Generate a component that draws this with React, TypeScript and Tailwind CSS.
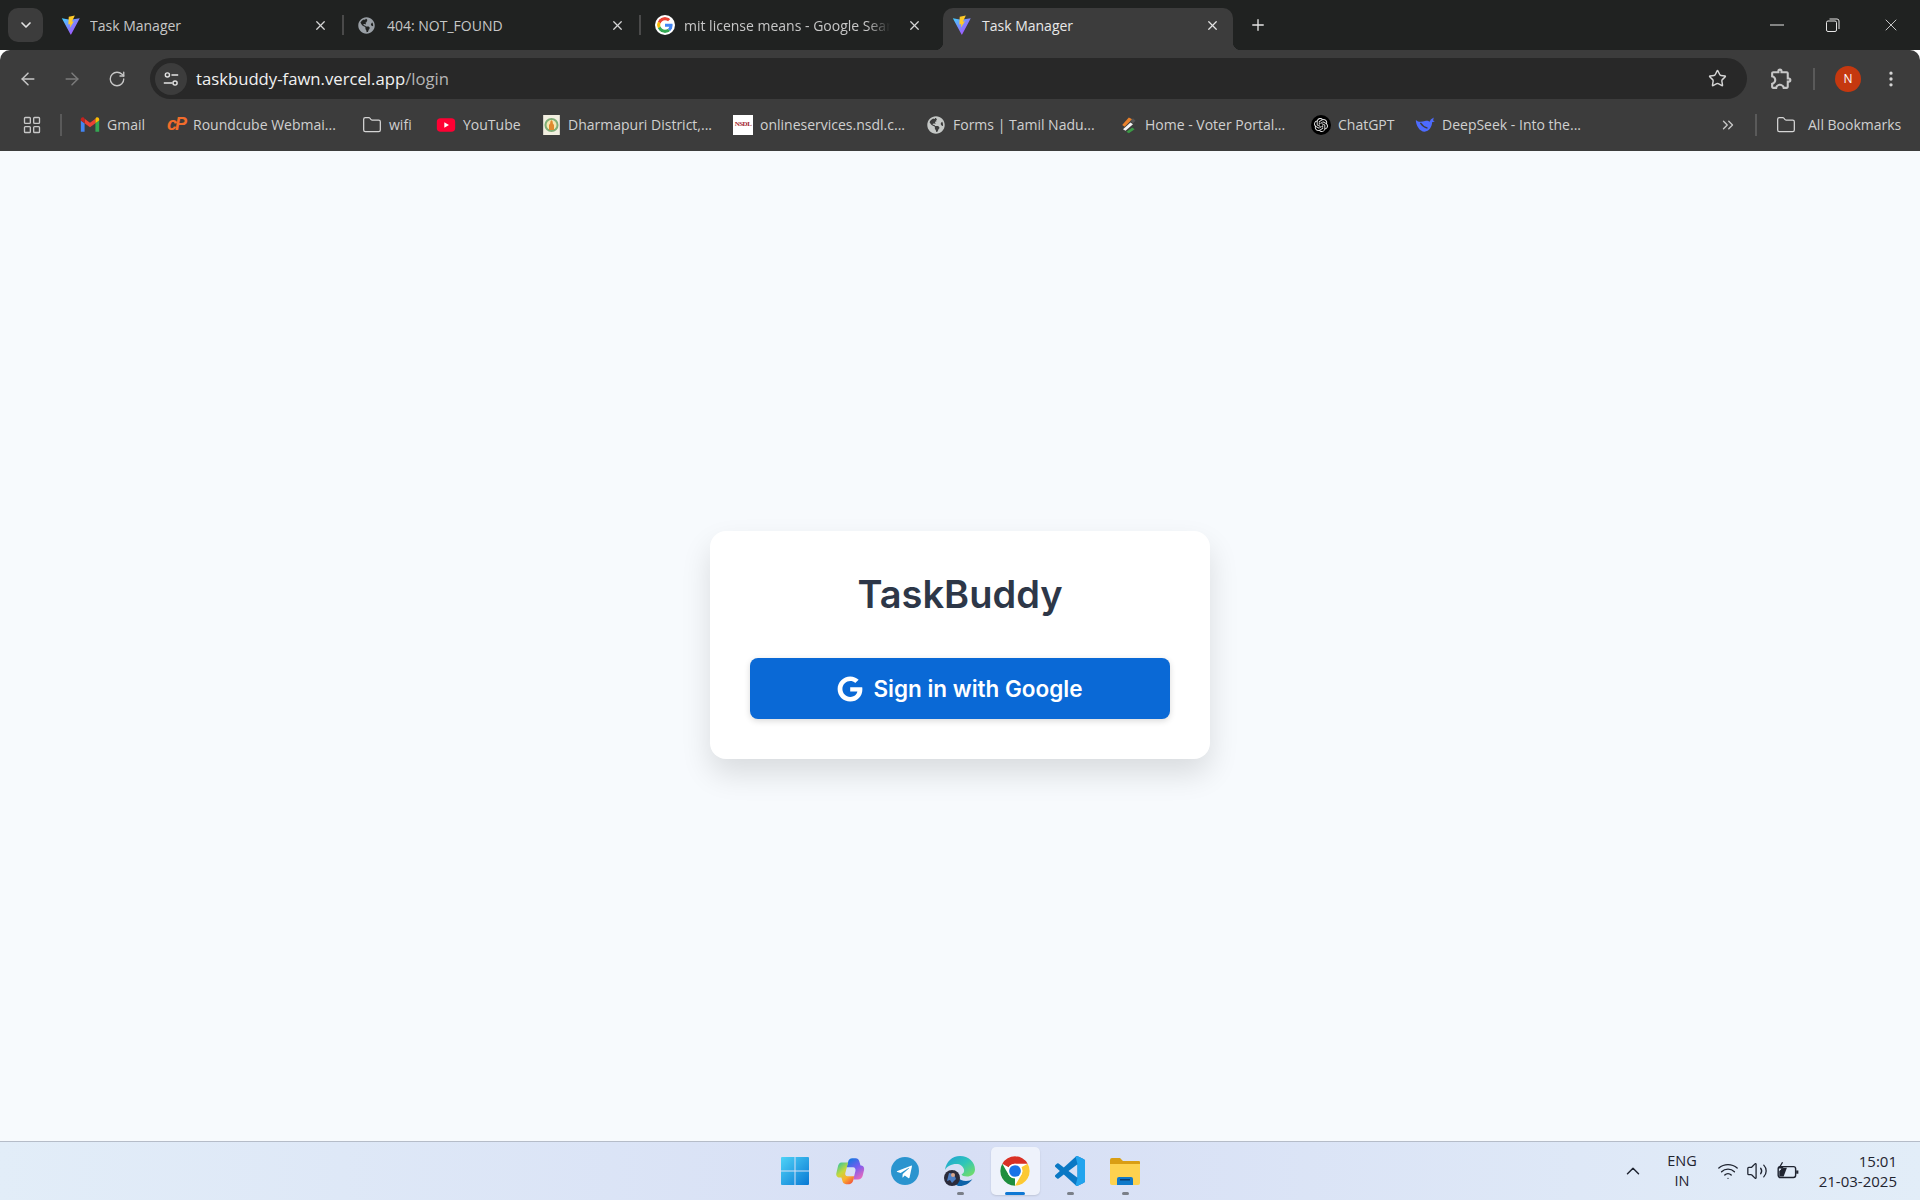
import React from 'react';
import {
  ArrowLeft, ArrowRight, ChevronDown, ChevronUp, ChevronsRight, EllipsisVertical, Folder,
  LayoutGrid, Plus, RotateCw, Star, Volume2, Wifi, X,
} from 'lucide-react';
import { FaGlobeAmericas, FaGoogle } from 'react-icons/fa';
import { MdOutlineExtension } from 'react-icons/md';
import { SiOpenai } from 'react-icons/si';

const ViteIcon = () => (
  <svg viewBox="0 0 24 24" className="h-[20px] w-[20px]">
    <defs>
      <linearGradient id="viteA" x1="0" y1="0" x2="1" y2="1">
        <stop offset="0" stopColor="#41d1ff" />
        <stop offset="1" stopColor="#bd34fe" />
      </linearGradient>
    </defs>
    <path d="M1 4l10 1.6L22.500 4 12.300 23.200c-.3.500-.8.500-1 0z" fill="url(#viteA)" />
    <path d="M16.600.5L9.300 2l-.5 9.300 2.400-.5-.6 4.400 5-7.700-2.600.5z" fill="#ffca28" />
  </svg>
);

const GoogleIcon = () => (
  <svg viewBox="0 0 48 48" className="h-[20px] w-[20px] rounded-full bg-white p-[2px]">
    <path fill="#ea4335" d="M24 9.500c3.500 0 6.700 1.200 9.200 3.600l6.900-6.900C35.900 2.400 30.500 0 24 0 14.600 0 6.500 5.400 2.600 13.200l8 6.200C12.400 13.700 17.700 9.500 24 9.500z" />
    <path fill="#4285f4" d="M46.900 24.500c0-1.600-.1-3.100-.4-4.500H24v9h12.900c-.6 3-2.200 5.500-4.700 7.200l7.700 6c4.400-4.100 7-10.200 7-17.700z" />
    <path fill="#fbbc05" d="M10.500 28.600c-.5-1.400-.8-3-.8-4.600s.3-3.200.8-4.600l-8-6.200C.9 16.500 0 20.100 0 24s.9 7.500 2.600 10.800z" />
    <path fill="#34a853" d="M24 48c6.500 0 11.900-2.100 15.900-5.800l-7.700-6c-2.200 1.400-4.900 2.300-8.200 2.300-6.300 0-11.600-4.200-13.500-9.900l-8 6.200C6.500 42.600 14.600 48 24 48z" />
  </svg>
);

const GmailIcon = () => (
  <svg viewBox="0 0 24 24" className="h-[20px] w-[20px]">
    <path fill="#4285f4" d="M1 20h4.500V10L1 6.500z" />
    <path fill="#34a853" d="M18.500 20H23V6.500L18.500 10z" />
    <path fill="#ea4335" d="M5.500 10V4.500L12 9.400l6.500-4.900V10L12 14.800z" />
    <path fill="#fbbc04" d="M18.500 4.500V10L23 6.500V5c0-2-2.200-3-3.700-1.800z" />
    <path fill="#c5221f" d="M1 6.500L5.500 10V4.500L4.700 3.200C3.200 2 1 3 1 5z" />
  </svg>
);

const YoutubeIcon = () => (
  <svg viewBox="0 0 24 24" className="h-[20px] w-[20px]">
    <rect x="1" y="4" width="22" height="16" rx="4.500" fill="#ff0033" />
    <path d="M10 8.800l5.500 3.200-5.500 3.200z" fill="#fff" />
  </svg>
);

const DistrictIcon = () => (
  <svg viewBox="0 0 20 24" className="h-[20px] w-[17px]">
    <rect width="20" height="24" fill="#f2efe0" />
    <circle cx="10" cy="12" r="8.500" fill="#7fae76" />
    <circle cx="10" cy="12" r="6" fill="#f6e7b0" />
    <path d="M7 18v-6l1.500-2V8l1.500-2 1.500 2v2l1.500 2v6z" fill="#e08a2e" />
  </svg>
);

const NsdlIcon = () => (
  <div className="flex h-[20px] w-[20px] items-center justify-center overflow-hidden bg-white font-['Liberation_Serif',serif] text-[7px] font-bold tracking-[-0.5px] text-[#a3262e]">
    NSDL
  </div>
);

const VoterIcon = () => (
  <svg viewBox="0 0 24 24" className="h-[20px] w-[20px]">
    <path d="M13 3l4 2-9 9-3-2z" fill="#e9812b" />
    <path d="M15 9l3 2-9 8-3-2z" fill="#f5f5f5" />
    <path d="M17 15l3 2-7 5-3-2z" fill="#3c9a47" />
    <path d="M18 4l3 3-3 3-3-3z" fill="#555" />
  </svg>
);

const ChatgptIcon = () => (
  <div className="flex h-[20px] w-[20px] items-center justify-center rounded-full bg-black text-[#e8e8e8]">
    <SiOpenai size={14} />
  </div>
);

const DeepseekIcon = () => (
  <svg viewBox="0 0 24 24" className="h-[20px] w-[20px]">
    <path d="M1 6c3 3 7 2.500 11 1.200 2.500-.7 4.500-.2 5.500 1L19 5.500 22.500 3l-.8 3.500 2 1.200-3.200 1.100C20.500 14 17 20 11.500 20 5.500 20 1 12.500 1 6z" fill="#4d6bfe" />
    <path d="M6.500 9.500c2 3.200 4.500 5.200 8.500 6.200" fill="none" stroke="#3c3c3c" strokeWidth="1.600" />
  </svg>
);

const TuneIcon = () => (
  <svg viewBox="0 0 20 20" className="h-[18px] w-[18px]" fill="none" stroke="#e3e3e3" strokeWidth="1.600">
    <circle cx="6" cy="5.500" r="2.300" />
    <path d="M10.500 5.500H18M2 14.500h9.500" />
    <circle cx="14.500" cy="14.500" r="2.300" />
  </svg>
);

const WindowsIcon = () => (
  <svg viewBox="0 0 30 30" className="h-[30px] w-[30px]">
    <defs>
      <linearGradient id="winA" x1="0" y1="0" x2="1" y2="1">
        <stop offset="0" stopColor="#4fd3f7" />
        <stop offset="1" stopColor="#0878d4" />
      </linearGradient>
    </defs>
    <path d="M1 2a1 1 0 0 1 1-1h12.500v13.500H1zM15.500 1H28a1 1 0 0 1 1 1v12.500H15.500zM1 15.500h13.500V29H2a1 1 0 0 1-1-1zM15.500 15.500H29V28a1 1 0 0 1-1 1H15.500z" fill="url(#winA)" />
  </svg>
);

const CopilotIcon = () => (
  <svg viewBox="0 0 32 32" className="h-[30px] w-[30px]">
    <defs>
      <linearGradient id="copA" x1="0.2" y1="0" x2="0.8" y2="1">
        <stop offset="0" stopColor="#1478e0" />
        <stop offset="0.5" stopColor="#7a5cf0" />
        <stop offset="1" stopColor="#f06ab8" />
      </linearGradient>
      <linearGradient id="copB" x1="0.1" y1="0" x2="0.8" y2="1">
        <stop offset="0" stopColor="#2fc7a0" />
        <stop offset="0.4" stopColor="#c8d83c" />
        <stop offset="0.7" stopColor="#fbb02e" />
        <stop offset="1" stopColor="#f2563c" />
      </linearGradient>
    </defs>
    <path d="M14 6c.6-2 2-3.500 4.500-3.500H22c2 0 3.300 1.300 3.900 3.200l1.300 4.300h.8c2.500 0 3.500 2.500 3 5l-1.500 6c-.6 2.500-2.600 4-5 4h-5l2.300-9c.5-2-.5-4-2.500-4h-7z" fill="url(#copA)" />
    <path d="M7 7h7l-3 11c-.5 2 .5 3.500 2.500 3.500h7l-1.200 5c-.5 2-2 3.500-4 3.500h-3.500c-2 0-3.300-1.200-3.800-3l-1.200-4H5c-2.800 0-4.200-2.500-3.500-5l1.300-5.500C3.300 9 5 7 7 7z" fill="url(#copB)" />
  </svg>
);

const TelegramIcon = () => (
  <svg viewBox="0 0 24 24" className="h-[28px] w-[28px]">
    <circle cx="12" cy="12" r="12" fill="#2a94cf" />
    <path d="M5.500 11.900l11.600-4.500c.5-.2 1 .1.800.9l-2 9.300c-.1.700-.5.800-1.100.5l-3-2.200-1.400 1.400c-.2.200-.3.300-.6.300l.2-3 5.500-5c.2-.2 0-.3-.4-.1l-6.800 4.300-2.900-.9c-.6-.2-.6-.6.100-.9z" fill="#fff" />
  </svg>
);

const EdgeIcon = () => (
  <svg viewBox="0 0 32 32" className="h-[32px] w-[32px]">
    <defs>
      <linearGradient id="edgeA" x1="0" y1="0" x2="1" y2="1">
        <stop offset="0" stopColor="#1f9fd8" />
        <stop offset="0.5" stopColor="#2fc6b8" />
        <stop offset="1" stopColor="#7fe05a" />
      </linearGradient>
    </defs>
    <path d="M1 15C2 7 8 1 16 1c8.500 0 15 6 15 13.500 0 4.500-4 7-8 7-3 0-5-1-5.500-2 2-1 3-3 2.500-5C19 11 16 9 12.500 9 7 9 3 11.500 1 15z" fill="url(#edgeA)" />
    <path d="M11 15c-1 5 4 11 11 11 3 0 5-.8 6.500-2C25 29 20 31 16 31 8 31 8 20 11 15z" fill="#0c63a8" />
    <circle cx="8" cy="23" r="8" fill="#2b2b3a" />
    <path d="M5 18l5 1 2 5-4 4-2-3-3 1z" fill="#4d7fc4" />
    <circle cx="9" cy="20" r="2" fill="#d9a58a" />
  </svg>
);

const ChromeIcon = () => (
  <svg viewBox="0 0 48 48" className="h-[32px] w-[32px]">
    <circle cx="24" cy="24" r="22" fill="#fff" />
    <path d="M4.950 13A22 22 0 0 1 43.050 13H24A11 11 0 0 0 14.470 18.500Z" fill="#d93025" />
    <path d="M4.950 13A22 22 0 0 1 43.050 13H24A11 11 0 0 0 14.470 18.500Z" fill="#fcc934" transform="rotate(120 24 24)" />
    <path d="M4.950 13A22 22 0 0 1 43.050 13H24A11 11 0 0 0 14.470 18.500Z" fill="#1e8e3e" transform="rotate(240 24 24)" />
    <circle cx="24" cy="24" r="11" fill="#fff" />
    <circle cx="24" cy="24" r="8.800" fill="#1a73e8" />
  </svg>
);

const VscodeIcon = () => (
  <svg viewBox="0 0 24 24" className="h-[30px] w-[30px]">
    <path fill="#0a78c4" d="M23.150 2.587L18.210.21a1.494 1.494 0 0 0-1.705.29l-9.460 8.630-4.120-3.128a.999.999 0 0 0-1.276.057L.327 7.261A1 1 0 0 0 .326 8.740L3.899 12 .326 15.260a1 1 0 0 0 .001 1.479L1.650 17.940a.999.999 0 0 0 1.276.057l4.120-3.128 9.460 8.630a1.492 1.492 0 0 0 1.704.290l4.942-2.377A1.500 1.500 0 0 0 24 20.060V3.939a1.500 1.500 0 0 0-.850-1.352zm-5.146 14.861L10.826 12l7.178-5.448v10.896z" />
    <path fill="#22a4ee" d="M16.500.5a1.494 1.494 0 0 1 1.710-.29l4.940 2.377A1.500 1.500 0 0 1 24 3.939V20.060a1.500 1.500 0 0 1-.850 1.352l-4.942 2.377a1.492 1.492 0 0 1-1.704-.290l1.500-6.050V6.552z" />
  </svg>
);

const ExplorerIcon = () => (
  <svg viewBox="0 0 32 28" className="h-[28px] w-[32px]">
    <path d="M1 3a2 2 0 0 1 2-2h8l3 3h16a1 1 0 0 1 1 1v3H1z" fill="#d99e14" />
    <path d="M1 7h30v19a2 2 0 0 1-2 2H3a2 2 0 0 1-2-2z" fill="#fdd24f" />
    <path d="M8 28v-6a2 2 0 0 1 2-2h12a2 2 0 0 1 2 2v6z" fill="#0f79c9" />
    <rect x="11" y="22" width="10" height="1.500" fill="#0b3f70" />
  </svg>
);

const BatteryIcon = () => (
  <svg viewBox="0 0 22 18" className="h-[20px] w-[24px]" fill="none" stroke="#1f2430" strokeWidth="1.300">
    <rect x="2" y="5" width="16" height="10" rx="2" />
    <path d="M19.500 8.500v3" strokeWidth="2" />
    <path d="M3 14V9l4-3h3l-3 8z" fill="#1f2430" stroke="none" />
    <path d="M6 1L3 6h3L4.500 9" strokeWidth="1.200" />
  </svg>
);

const tabs = [
  { title: 'Task Manager', icon: <ViteIcon /> },
  { title: '404: NOT_FOUND', icon: <FaGlobeAmericas size={17} className="-ml-[4px] text-[#9aa0a6]" /> },
  { title: 'mit license means - Google Search', icon: <GoogleIcon /> },
];

const bookmarks = [
  { label: 'Gmail', width: 'w-[86px]', icon: <GmailIcon /> },
  {
    label: 'Roundcube Webmai...',
    width: 'w-[196px]',
    icon: <span className="font-['Liberation_Sans',sans-serif] text-[18px] font-bold italic tracking-[-2px] text-[#f26c2b]">cP</span>,
  },
  { label: 'wifi', width: 'w-[74px]', icon: <Folder size={20} strokeWidth={1.5} className="text-[#d5d5d5]" /> },
  { label: 'YouTube', width: 'w-[105px]', icon: <YoutubeIcon /> },
  { label: 'Dharmapuri District,...', width: 'w-[192px]', icon: <DistrictIcon /> },
  { label: 'onlineservices.nsdl.c...', width: 'w-[193px]', icon: <NsdlIcon /> },
  { label: 'Forms | Tamil Nadu...', width: 'w-[192px]', icon: <FaGlobeAmericas size={18} className="text-[#c4c7c5]" /> },
  { label: 'Home - Voter Portal...', width: 'w-[193px]', icon: <VoterIcon /> },
  { label: 'ChatGPT', width: 'w-[104px]', icon: <ChatgptIcon /> },
  { label: 'DeepSeek - Into the...', width: 'w-[190px]', icon: <DeepseekIcon /> },
];

const taskbarApps = [
  { icon: <WindowsIcon />, dot: false },
  { icon: <CopilotIcon />, dot: false },
  { icon: <TelegramIcon />, dot: false },
  { icon: <EdgeIcon />, dot: true },
  { icon: <ChromeIcon />, dot: false, active: true },
  { icon: <VscodeIcon />, dot: true },
  { icon: <ExplorerIcon />, dot: true },
];

const App = () => {
  return (
    <div className="flex h-screen flex-col overflow-hidden font-['Open_Sans',sans-serif]">
      {/* Tab strip */}
      <div className="flex h-[50px] shrink-0 items-end bg-[#202221] pl-[8px] text-[14px] text-[#c7c7c7]">
        <div className="mb-[8px] mr-[4px] flex h-[34px] w-[35px] items-center justify-center rounded-[10px] bg-[#3c3c3c]">
          <ChevronDown size={16} strokeWidth={2.5} className="text-[#e3e3e3]" />
        </div>
        {tabs.map((tab, i) => (
          <div key={tab.title} className="flex h-[50px] w-[297px] items-center pl-[14px]">
            <div className="flex w-[20px] justify-center">{tab.icon}</div>
            <span className={`ml-[9px] w-[215px] shrink-0 overflow-hidden whitespace-nowrap ${i === 2 ? '[mask-image:linear-gradient(to_right,black_85%,transparent_96%)]' : ''}`}>
              {tab.title}
            </span>
            <X size={15} strokeWidth={2} className="ml-[8px] shrink-0 text-[#d5d5d5]" />
            {i < 2 && <div className="ml-[14px] h-[20px] w-[2px] shrink-0 bg-[#4a4a4a]" />}
          </div>
        ))}
        {/* Active tab */}
        <div className="relative ml-[5px] flex h-[42px] w-[290px] items-center rounded-t-[10px] bg-[#3c3c3c] pb-[8px] pl-[9px] text-[#e8e8e8]">
          <div className="absolute -left-[8px] bottom-0 h-[8px] w-[8px] bg-[radial-gradient(circle_at_0_0,transparent_8px,#3c3c3c_8.500px)]" />
          <div className="absolute -right-[8px] bottom-0 h-[8px] w-[8px] bg-[radial-gradient(circle_at_100%_0,transparent_8px,#3c3c3c_8.500px)]" />
          <ViteIcon />
          <span className="ml-[10px] w-[223px]">Task Manager</span>
          <X size={15} strokeWidth={2} className="text-[#e3e3e3]" />
        </div>
        <div className="mb-[8px] ml-[16px] flex h-[34px] w-[18px] items-center justify-center">
          <Plus size={20} strokeWidth={1.8} className="text-[#e3e3e3]" />
        </div>
        <div className="mb-[10px] ml-auto flex h-[30px] items-center pr-[19px] text-white">
          <svg viewBox="0 0 14 2" className="h-[2px] w-[14px]"><path d="M0 1h14" stroke="#e6e6e6" strokeWidth="1" /></svg>
          <svg viewBox="0 0 14 14" className="ml-[42px] h-[14px] w-[14px]" fill="none" stroke="#e6e6e6" strokeWidth="1">
            <rect x="0.500" y="3" width="10" height="10.500" rx="1.500" />
            <path d="M3.500 1h7.500a2 2 0 0 1 2 2v8" />
          </svg>
          <X size={20} strokeWidth={1} className="ml-[41px] text-[#e6e6e6]" />
        </div>
      </div>

      {/* Toolbar */}
      <div className="flex h-[50px] shrink-0 items-center rounded-t-[10px] bg-[#3c3c3c] pt-[7px]">
        <ArrowLeft size={20} strokeWidth={1.8} className="ml-[18px] text-[#c7c7c7]" />
        <ArrowRight size={20} strokeWidth={1.8} className="ml-[24px] text-[#7b7b7b]" />
        <RotateCw size={18} strokeWidth={1.8} className="ml-[26px] text-[#c7c7c7]" />
        <div className="ml-[24px] flex h-[41px] w-[1597px] items-center rounded-full bg-[#282828] pl-[5px] pr-[20px]">
          <div className="flex h-[32px] w-[32px] items-center justify-center rounded-full bg-[#3c3c3c]">
            <TuneIcon />
          </div>
          <div className="ml-[9px] flex-1 text-[16.700px] text-[#f1f1f1]">
            taskbuddy-fawn.vercel.app<span className="text-[#b5b5b5]">/login</span>
          </div>
          <Star size={19} strokeWidth={1.8} className="text-[#d5d5d5]" />
        </div>
        <MdOutlineExtension size={25} className="ml-[22px] text-[#c7c7c7]" />
        <div className="ml-[19px] h-[22px] w-[2px] bg-[#5a5a5a]" />
        <div className="ml-[20px] flex h-[26px] w-[26px] items-center justify-center rounded-full bg-[#c5380f] text-[12px] text-white">N</div>
        <EllipsisVertical size={20} className="ml-[20px] text-[#d5d5d5]" />
      </div>

      {/* Bookmarks bar */}
      <div className="flex h-[51px] shrink-0 items-center bg-[#3c3c3c] pb-[2px] text-[14px] text-[#d0d0d0]">
        <LayoutGrid size={20} strokeWidth={1.6} className="ml-[22px] text-[#c7c7c7]" />
        <div className="ml-[18px] mr-[18px] h-[22px] w-[2px] bg-[#5a5a5a]" />
        {bookmarks.map(b => (
          <div key={b.label} className={`flex items-center ${b.width}`}>
            <div className="flex w-[20px] shrink-0 justify-center">{b.icon}</div>
            <span className="ml-[7px] whitespace-nowrap">{b.label}</span>
          </div>
        ))}
        <ChevronsRight size={18} strokeWidth={1.8} className="ml-[114px] text-[#c7c7c7]" />
        <div className="ml-[18px] h-[22px] w-[2px] bg-[#5a5a5a]" />
        <Folder size={20} strokeWidth={1.5} className="ml-[19px] text-[#d5d5d5]" />
        <span className="ml-[12px] whitespace-nowrap">All Bookmarks</span>
      </div>

      {/* Main Content */}
      <main className="flex flex-1 items-center justify-center bg-[#f7fafd] font-['Inter',sans-serif]">
        <div className="mt-[-2px] flex w-[500px] flex-col rounded-[16px] bg-white p-[40px] shadow-[0_15px_30px_rgba(0,0,0,0.12)]">
          <h1 className="text-center text-[38px] font-semibold leading-[47px] text-[#2d3748]">TaskBuddy</h1>
          <button className="mt-[40px] flex h-[61px] items-center justify-center gap-[10px] rounded-[8px] bg-[#0a69d6] text-[22.500px] font-semibold text-white shadow-[0_2px_6px_rgba(0,0,0,0.15)]">
            <FaGoogle size={26} />
            Sign in with Google
          </button>
        </div>
      </main>

      {/* Taskbar */}
      <footer className="flex h-[59px] shrink-0 items-center border-t border-[#b5bcc8] bg-gradient-to-r from-[#e2edf8] via-[#d7dff5] to-[#e2edf8] font-['Open_Sans',sans-serif] text-[14.500px] text-[#1f2430]">
        <div className="flex-1" />
        <div className="flex">
          {taskbarApps.map((app, i) => (
            <div key={i} className={`relative flex h-[48px] items-center justify-center ${app.active ? 'mx-[3px] w-[49px] rounded-[5px] bg-[#eef2fb] shadow-[0_1px_2px_rgba(0,0,0,0.12)]' : 'w-[55px]'}`}>
              {app.icon}
              {app.dot && <div className="absolute bottom-0 h-[3px] w-[7px] rounded-full bg-[#7a7f88]" />}
              {app.active && <div className="absolute bottom-0 h-[3px] w-[20px] rounded-full bg-[#0f78d4]" />}
            </div>
          ))}
        </div>
        <div className="flex flex-1 items-center justify-end">
          <ChevronUp size={22} strokeWidth={1.6} />
          <div className="ml-[23px] text-center leading-[20px]">
            <div>ENG</div>
            <div>IN</div>
          </div>
          <Wifi size={22} strokeWidth={1.5} className="ml-[20px]" />
          <Volume2 size={22} strokeWidth={1.4} className="ml-[7px]" />
          <div className="ml-[8px]"><BatteryIcon /></div>
          <div className="ml-[19px] mr-[23px] text-right text-[15px] leading-[20px]">
            <div>15:01</div>
            <div>21-03-2025</div>
          </div>
        </div>
      </footer>
    </div>
  );
};

export default App;
